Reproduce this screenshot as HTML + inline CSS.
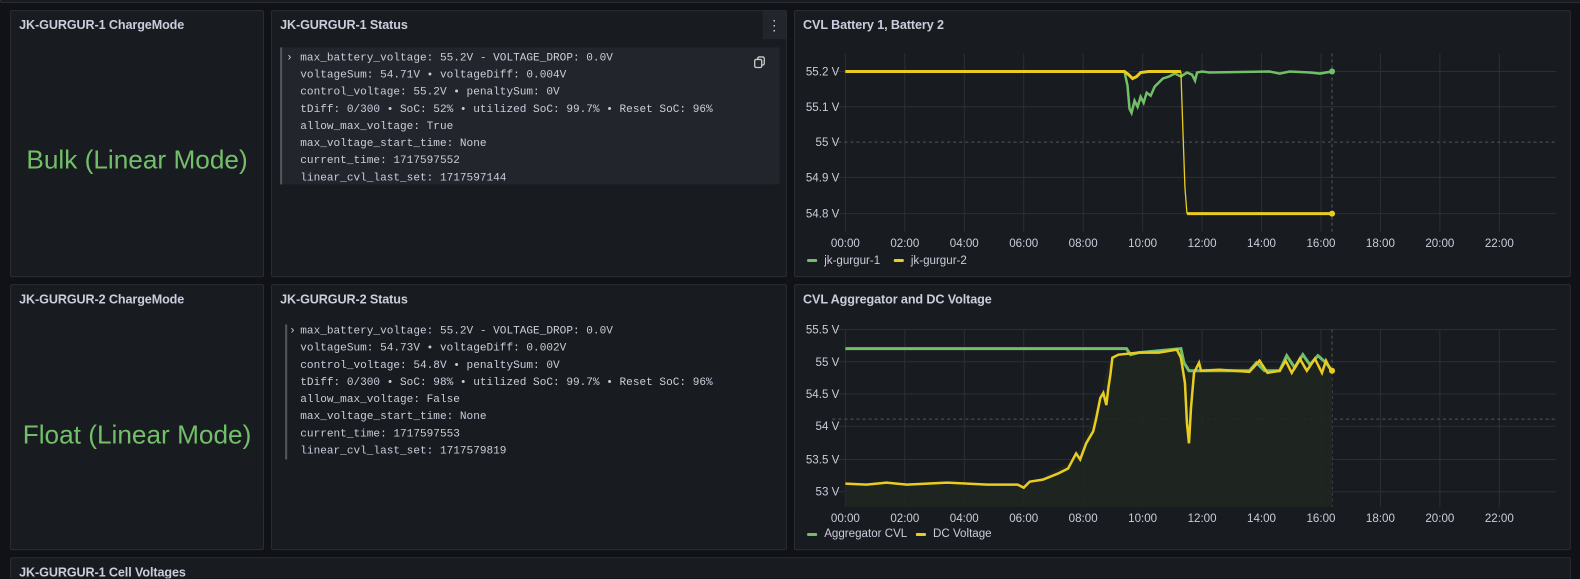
<!DOCTYPE html>
<html><head><meta charset="utf-8"><style>
*{box-sizing:border-box;margin:0;padding:0}
html,body{width:1580px;height:579px;overflow:hidden}
body{background:#111217;font-family:"Liberation Sans",sans-serif;color:#ccccdc;position:relative}
#w{position:absolute;left:0;top:0;width:1568px;height:574px;overflow:hidden;transform:scale(1.0076);transform-origin:0 0}
.p{position:absolute;background:#181b1f;border:1px solid #2a2d34;border-radius:2px}
.t{position:absolute;left:8px;top:7px;font-size:12.5px;font-weight:bold;color:#ccccdc;letter-spacing:-0.1px}
.big{position:absolute;left:0;right:0;text-align:center;color:#73bf69;font-size:26px}
.code{position:absolute;font-family:"Liberation Mono",monospace;font-size:11px;line-height:17px;color:#ccccdc;white-space:pre}
svg text{font-family:"Liberation Sans",sans-serif;font-size:11.5px;fill:#ccccdc}
</style></head><body><div id="w">
<div class="p" style="left:0;top:-10px;width:1580px;height:13px"></div>

<div class="p" style="left:10px;top:10px;width:252px;height:265px"><div class="t">JK-GURGUR-1 ChargeMode</div><div class="big" style="top:132px">Bulk (Linear Mode)</div></div>
<div class="p" style="left:269px;top:10px;width:512px;height:265px"><div class="t">JK-GURGUR-1 Status</div>
<div style="position:absolute;right:0;top:0;width:23px;height:28px;background:#22252b;color:#ccc;text-align:center;line-height:28px;font-size:14px">⋮</div>
<div style="position:absolute;left:8px;top:36px;width:496px;height:136px;background:#22252b;border-left:2px solid #55575d"></div>
<div class="code" style="left:14px;top:39px">›</div>
<div class="code" style="left:28px;top:39px">max_battery_voltage: 55.2V - VOLTAGE_DROP: 0.0V
voltageSum: 54.71V • voltageDiff: 0.004V
control_voltage: 55.2V • penaltySum: 0V
tDiff: 0/300 • SoC: 52% • utilized SoC: 99.7% • Reset SoC: 96%
allow_max_voltage: True
max_voltage_start_time: None
current_time: 1717597552
linear_cvl_last_set: 1717597144</div>
<svg style="position:absolute;left:477px;top:44px" width="14" height="14" viewBox="0 0 14 14"><rect x="2" y="4" width="7" height="8" rx="1.5" fill="none" stroke="#ccc" stroke-width="1.3"/><path d="M5 4V3a1.5 1.5 0 0 1 1.5-1.5H10A1.5 1.5 0 0 1 11.5 3v5A1.5 1.5 0 0 1 10 9.5H9" fill="none" stroke="#ccc" stroke-width="1.3"/></svg>
</div>
<div class="p" style="left:788px;top:10px;width:771px;height:265px"><div class="t">CVL Battery 1, Battery 2</div></div>

<div class="p" style="left:10px;top:282px;width:252px;height:264px"><div class="t">JK-GURGUR-2 ChargeMode</div><div class="big" style="top:133px">Float (Linear Mode)</div></div>
<div class="p" style="left:269px;top:282px;width:512px;height:264px"><div class="t">JK-GURGUR-2 Status</div>
<div style="position:absolute;left:13px;top:39px;width:2px;height:134px;background:#55575d"></div>
<div class="code" style="left:17px;top:38px">›</div>
<div class="code" style="left:28px;top:38px">max_battery_voltage: 55.2V - VOLTAGE_DROP: 0.0V
voltageSum: 54.73V • voltageDiff: 0.002V
control_voltage: 54.8V • penaltySum: 0V
tDiff: 0/300 • SoC: 98% • utilized SoC: 99.7% • Reset SoC: 96%
allow_max_voltage: False
max_voltage_start_time: None
current_time: 1717597553
linear_cvl_last_set: 1717579819</div>
</div>
<div class="p" style="left:788px;top:282px;width:771px;height:264px"><div class="t">CVL Aggregator and DC Voltage</div></div>

<div class="p" style="left:10px;top:553px;width:1549px;height:40px"><div class="t" style="top:7px">JK-GURGUR-1 Cell Voltages</div></div>

<svg style="position:absolute;left:0;top:0" width="1580" height="579">
<g stroke="#2c2f35" stroke-width="1">
<path d="M839 53V230M898 53V230M957 53V230M1016 53V230M1075 53V230M1134 53V230M1193 53V230M1252 53V230M1311 53V230M1370 53V230M1429 53V230M1488 53V230"/>
<path d="M826 71H1544M826 106H1544M826 176H1544M826 212H1544"/>
<path d="M839 327V503M898 327V503M957 327V503M1016 327V503M1075 327V503M1134 327V503M1193 327V503M1252 327V503M1311 327V503M1370 327V503M1429 327V503M1488 327V503"/>
<path d="M826 327H1544M826 359H1544M826 391H1544M826 423H1544M826 456H1544M826 488H1544"/>
</g>
<path d="M826 141H1544M826 416H1544" stroke="#55575d" stroke-dasharray="3 3"/>
<path d="M1322 53V230M1322 327V503" stroke="#55575d" stroke-dasharray="3 3"/>
<g text-anchor="end">
<text x="833" y="75">55.2 V</text><text x="833" y="110">55.1 V</text><text x="833" y="145">55 V</text><text x="833" y="180">54.9 V</text><text x="833" y="216">54.8 V</text>
<text x="833" y="331">55.5 V</text><text x="833" y="363">55 V</text><text x="833" y="395">54.5 V</text><text x="833" y="427">54 V</text><text x="833" y="460">53.5 V</text><text x="833" y="492">53 V</text>
</g>
<g text-anchor="middle">
<text x="839" y="245">00:00</text><text x="898" y="245">02:00</text><text x="957" y="245">04:00</text><text x="1016" y="245">06:00</text><text x="1075" y="245">08:00</text><text x="1134" y="245">10:00</text><text x="1193" y="245">12:00</text><text x="1252" y="245">14:00</text><text x="1311" y="245">16:00</text><text x="1370" y="245">18:00</text><text x="1429" y="245">20:00</text><text x="1488" y="245">22:00</text>
<text x="839" y="518">00:00</text><text x="898" y="518">02:00</text><text x="957" y="518">04:00</text><text x="1016" y="518">06:00</text><text x="1075" y="518">08:00</text><text x="1134" y="518">10:00</text><text x="1193" y="518">12:00</text><text x="1252" y="518">14:00</text><text x="1311" y="518">16:00</text><text x="1370" y="518">18:00</text><text x="1429" y="518">20:00</text><text x="1488" y="518">22:00</text>
</g>
<rect x="801" y="257" width="10" height="3" rx="1" fill="#73bf69"/><text x="818" y="262">jk-gurgur-1</text>
<rect x="887" y="257" width="10" height="3" rx="1" fill="#e8cc22"/><text x="904" y="262">jk-gurgur-2</text>
<rect x="801" y="529" width="10" height="3" rx="1" fill="#73bf69"/><text x="818" y="533">Aggregator CVL</text>
<rect x="909" y="529" width="10" height="3" rx="1" fill="#e8cc22"/><text x="926" y="533">DC Voltage</text>
<polyline fill="none" stroke="#73bf69" stroke-width="2.5" points="839,71 1116,71 1119,85 1121,108 1123,112 1126,100 1129,106 1132,96 1135,102 1138,92 1142,95 1146,86 1150,82 1154,78 1160,76 1166,73 1172,76 1178,72 1183,74 1186,80 1188,72 1193,71 1200,72 1260,71 1270,73 1280,71 1300,72 1310,73 1322,71"/>
<polyline fill="none" stroke="#e8cc22" stroke-width="1.3" points="1172,71 1174,130 1176,186 1178,212"/>
<polyline fill="none" stroke="#e8cc22" stroke-width="3" points="839,71 1116,71 1120,74 1124,78 1128,76 1132,72 1140,71 1172,71"/>
<polyline fill="none" stroke="#e8cc22" stroke-width="3" points="1178,212 1322,212"/>
<circle cx="1322" cy="212" r="3" fill="#e8cc22"/><circle cx="1322" cy="71" r="3" fill="#73bf69"/>
<path d="M839 480L1020 482L1040 470L1060 460L1075 440L1090 400L1100 360L1110 352L1172 349L1176 362L1200 365L1322 363V503H839Z" fill="#1f2620" opacity="0.9"/>
<polyline fill="none" stroke="#73bf69" stroke-width="3" points="839,346 1118,346 1122,352 1130,350 1172,346 1175,360 1180,368 1240,368 1247,360 1255,368 1270,368 1277,353 1285,365 1293,352 1300,362 1308,353 1316,360 1322,368"/>
<polyline fill="none" stroke="#e8cc22" stroke-width="2.5" points="839,480 860,481 880,479 900,481 940,479 980,481 1010,481 1016,484 1022,478 1035,476 1050,470 1060,465 1068,450 1072,456 1078,440 1085,428 1088,415 1092,395 1095,390 1098,402 1100,385 1102,372 1104,355 1110,352 1130,350 1150,350 1168,347 1172,355 1176,380 1178,420 1180,440 1182,405 1185,370 1190,360 1192,368 1210,367 1240,369 1250,358 1258,370 1270,368 1276,358 1282,370 1290,356 1297,368 1305,356 1312,370 1316,358 1322,370"/>
<circle cx="1322" cy="368" r="3" fill="#e8cc22"/>
</svg>
</div></body></html>
